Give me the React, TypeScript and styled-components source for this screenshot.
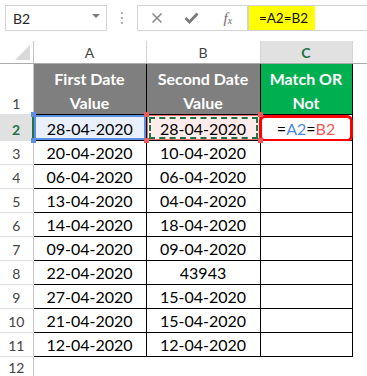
import React from 'react';
import styled, { createGlobalStyle } from 'styled-components';

const GlobalStyle = createGlobalStyle`
  html, body {
    margin: 0;
    padding: 0;
    background: #ffffff;
  }
  body {
    font-family: Lato, "Noto Sans", sans-serif;
    width: 367px;
    height: 376px;
    overflow: hidden;
  }
`;

const Page = styled.div`
  width: 367px;
  height: 376px;
  overflow: hidden;
  background: #fff;
`;

const Toolbar = styled.div`
  display: flex;
  align-items: stretch;
  height: 26px;
  padding: 5px 0 10px 5px;
`;

const NameBox = styled.div`
  width: 102px;
  border: 1px solid #d4d4d4;
  display: flex;
  align-items: center;
  justify-content: space-between;
  padding: 0 6px 0 7px;
  box-sizing: border-box;
  font-size: 14px;
  color: #262626;
`;

const Caret = styled.span`
  width: 0;
  height: 0;
  border-left: 4px solid transparent;
  border-right: 4px solid transparent;
  border-top: 4px solid #7a7a7a;
  margin-top: -4px;
`;

const Dots = styled.div`
  width: 30px;
  display: flex;
  flex-direction: column;
  align-items: center;
  justify-content: center;
  gap: 3px;
`;

const Dot = styled.span`
  width: 2px;
  height: 2px;
  background: #b0b0b0;
`;

const ButtonBox = styled.div`
  width: 111px;
  border: 1px solid #d4d4d4;
  box-sizing: border-box;
  display: flex;
  align-items: center;
  justify-content: space-around;
  padding: 0 4px 0 2px;
`;

const IconBtn = styled.span`
  width: 28px;
  display: flex;
  align-items: center;
  justify-content: center;
  color: #777;
`;

const Fx = styled.span`
  font-family: "Liberation Serif", serif;
  font-style: italic;
  font-size: 15px;
  color: #6f6f6f;
  margin-left: 4px;
  sub {
    font-size: 10px;
    vertical-align: -1px;
  }
`;

const FormulaField = styled.div`
  flex: 1;
  border-top: 1px solid #d4d4d4;
  border-bottom: 1px solid #d4d4d4;
  border-left: 1px solid #d4d4d4;
  display: flex;
  align-items: stretch;
`;

const Highlight = styled.span`
  background: #ffff00;
  width: 66px;
  display: flex;
  align-items: center;
  justify-content: center;
  font-size: 13.5px;
  color: #111;
  padding-left: 3px;
  box-sizing: border-box;
`;

const Sheet = styled.table`
  border-collapse: collapse;
  table-layout: fixed;
  width: 367px;
`;

const ColHead = styled.th<{ $active?: boolean }>`
  height: 22px;
  padding: 0;
  font-weight: ${({ $active }) => ($active ? 700 : 400)};
  font-size: 14px;
  color: ${({ $active }) => ($active ? '#217346' : '#444')};
  background: ${({ $active }) => ($active ? '#e1e1e1' : '#fff')};
  border-right: 1px solid #d4d4d4;
  border-bottom: 1px solid #ababab;
  text-align: center;
  vertical-align: middle;
`;

const Corner = styled.th`
  height: 22px;
  padding: 0;
  border-right: 1px solid #c6c6c6;
  border-bottom: 1px solid #ababab;
  position: relative;
`;

const CornerMark = styled.span`
  position: absolute;
  right: 3px;
  bottom: 3px;
  width: 0;
  height: 0;
  border-left: 15px solid transparent;
  border-bottom: 15px solid #d9d9d9;
`;

const RowHead = styled.td<{ $active?: boolean }>`
  padding: 0 0 1px 0;
  font-size: 14px;
  line-height: 18px;
  text-align: center;
  vertical-align: bottom;
  color: ${({ $active }) => ($active ? '#217346' : '#444')};
  font-weight: ${({ $active }) => ($active ? 700 : 400)};
  background: ${({ $active }) => ($active ? '#e1e1e1' : '#fff')};
  border-right: ${({ $active }) => ($active ? '2px solid #217346' : '1px solid #c6c6c6')};
  border-bottom: 1px solid #e1e1e1;
`;

const Row = styled.tr<{ $h: number }>`
  height: ${({ $h }) => $h}px;
`;

const HeadCell = styled.td<{ $green?: boolean }>`
  padding: 3px 0 0 0;
  border: 1px solid #000;
  background: ${({ $green }) => ($green ? '#00b050' : '#7f7f7f')};
  color: #fff;
  font-weight: 700;
  font-size: 16px;
  line-height: 23.5px;
  text-align: center;
  vertical-align: top;
`;

const Cell = styled.td<{ $bg?: string }>`
  padding: 0 0 1px 0;
  border: 1px solid #000;
  background: ${({ $bg }) => $bg || '#fff'};
  font-size: 16px;
  line-height: 20px;
  color: #000;
  text-align: center;
  vertical-align: bottom;
  position: relative;
`;

const Blank = styled.td`
  padding: 0;
`;

const Frame = styled.span<{ $color: string; $width: number }>`
  position: absolute;
  inset: 0;
  border: ${({ $width, $color }) => `${$width}px solid ${$color}`};
  pointer-events: none;
`;

const Marquee = styled.span`
  position: absolute;
  inset: 2px 2px 1px 2px;
  border: 2px dashed #217346;
  pointer-events: none;
`;

const Knob = styled.span<{ $color: string; $x: 'l' | 'r'; $y: 't' | 'b' }>`
  position: absolute;
  width: 5px;
  height: 5px;
  background: ${({ $color }) => $color};
  ${({ $x }) => ($x === 'l' ? 'left: -3px;' : 'right: -3px;')}
  ${({ $y }) => ($y === 't' ? 'top: -3px;' : 'bottom: -3px;')}
  z-index: 2;
`;

const Callout = styled.span`
  position: absolute;
  inset: 0 -1px -2px -2px;
  border: 3px solid #ff0000;
  border-radius: 6px;
  pointer-events: none;
`;

const RefA = styled.span`
  color: #4f86ec;
`;

const RefB = styled.span`
  color: #f25858;
`;

const rows: [string, string][] = [
  ['20-04-2020', '10-04-2020'],
  ['06-04-2020', '06-04-2020'],
  ['13-04-2020', '04-04-2020'],
  ['14-04-2020', '18-04-2020'],
  ['09-04-2020', '09-04-2020'],
  ['22-04-2020', '43943'],
  ['27-04-2020', '15-04-2020'],
  ['21-04-2020', '15-04-2020'],
  ['12-04-2020', '12-04-2020'],
];

const App: React.FC = () => {
  return (
    <Page>
      <GlobalStyle />
      <Toolbar>
        <NameBox>
          <span>B2</span>
          <Caret />
        </NameBox>
        <Dots>
          <Dot />
          <Dot />
          <Dot />
        </Dots>
        <ButtonBox>
          <IconBtn>
            <svg width="12" height="12" viewBox="0 0 12 12">
              <path d="M1.5 1.5 L10.5 10.5 M10.5 1.5 L1.5 10.5" stroke="#8a8a8a" strokeWidth="1.6" />
            </svg>
          </IconBtn>
          <IconBtn>
            <svg width="15" height="12" viewBox="0 0 15 12">
              <path d="M1.5 6 L5.5 10 L13.5 1.5" stroke="#7a7a7a" strokeWidth="2.8" fill="none" />
            </svg>
          </IconBtn>
          <IconBtn>
            <Fx>
              f<sub>x</sub>
            </Fx>
          </IconBtn>
        </ButtonBox>
        <FormulaField>
          <Highlight>=A2=B2</Highlight>
        </FormulaField>
      </Toolbar>

      <Sheet>
        <colgroup>
          <col style={{ width: 33 }} />
          <col style={{ width: 113 }} />
          <col style={{ width: 114 }} />
          <col style={{ width: 92 }} />
          <col />
        </colgroup>
        <thead>
          <tr>
            <Corner>
              <CornerMark />
            </Corner>
            <ColHead>A</ColHead>
            <ColHead>B</ColHead>
            <ColHead $active>C</ColHead>
            <ColHead style={{ borderRight: 'none' }} />
          </tr>
        </thead>
        <tbody>
          <Row $h={48}>
            <RowHead>1</RowHead>
            <HeadCell>
              First Date
              <br />
              Value
            </HeadCell>
            <HeadCell>
              Second Date
              <br />
              Value
            </HeadCell>
            <HeadCell $green>
              Match OR
              <br />
              Not
            </HeadCell>
            <Blank />
          </Row>
          <Row $h={26}>
            <RowHead $active>2</RowHead>
            <Cell $bg="#e9f0fc">
              <Frame $color="#5b8fe0" $width={2} />
              <Knob $color="#5b8fe0" $x="l" $y="t" />
              <Knob $color="#5b8fe0" $x="l" $y="b" />
              28-04-2020
            </Cell>
            <Cell $bg="#fdeceb">
              <Frame $color="#e96a6a" $width={1} />
              <Marquee />
              <Knob $color="#e85c5c" $x="l" $y="t" />
              <Knob $color="#e85c5c" $x="l" $y="b" />
              <Knob $color="#e85c5c" $x="r" $y="t" />
              <Knob $color="#e85c5c" $x="r" $y="b" />
              28-04-2020
            </Cell>
            <Cell>
              <Callout />
              =<RefA>A2</RefA>=<RefB>B2</RefB>
            </Cell>
            <Blank />
          </Row>
          {rows.map(([a, b], i) => (
            <Row $h={24} key={i}>
              <RowHead>{i + 3}</RowHead>
              <Cell>{a}</Cell>
              <Cell>{b}</Cell>
              <Cell />
              <Blank />
            </Row>
          ))}
          <Row $h={22}>
            <RowHead>12</RowHead>
            <Blank />
            <Blank />
            <Blank />
            <Blank />
          </Row>
        </tbody>
      </Sheet>
    </Page>
  );
};

export default App;
